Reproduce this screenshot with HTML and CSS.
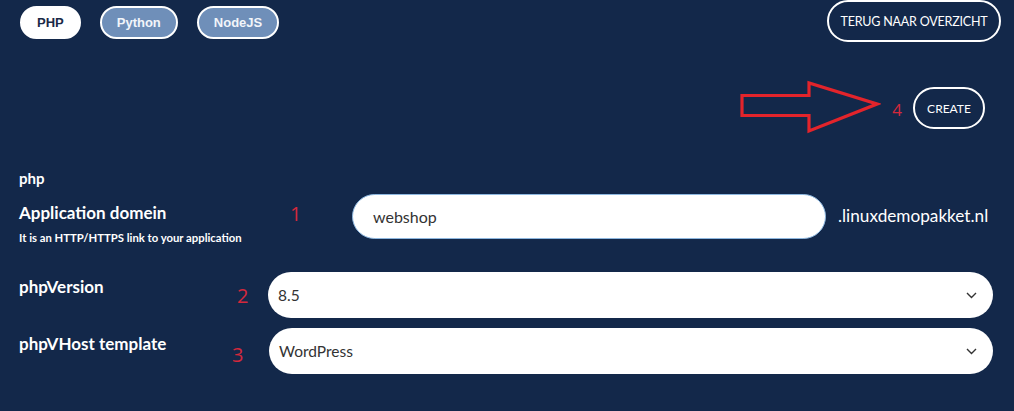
FILE: index.html
```html
<!DOCTYPE html>
<html lang="nl">
<head>
<meta charset="utf-8">
<title>Application</title>
<link rel="stylesheet" href="styles.css">
</head>
<body>
<div class="page">
  <header class="topbar">
    <nav class="tabs">
      <button class="tab tab-active">PHP</button>
      <button class="tab">Python</button>
      <button class="tab">NodeJS</button>
    </nav>
    <button class="btn-outline btn-back">TERUG NAAR OVERZICHT</button>
  </header>

  <div class="actions">
    <svg class="arrow" width="142" height="56" viewBox="0 0 142 56" aria-hidden="true">
      <path d="M3 15.5 L70 15.5 L70 3 L138 24 L70 51 L70 35.5 L3 35.5 Z" fill="none" stroke="#e3242b" stroke-width="3.2" stroke-linejoin="miter"/>
    </svg>
    <span class="mark mark-4">4</span>
    <button class="btn-outline btn-create">CREATE</button>
  </div>

  <section class="form">
    <h2 class="form-title">php</h2>

    <div class="row row-domain">
      <div class="label">
        <div class="label-title">Application domein</div>
        <div class="label-hint">It is an HTTP/HTTPS link to your application</div>
      </div>
      <span class="mark mark-1">1</span>
      <div class="field field-input">webshop</div>
      <span class="suffix">.linuxdemopakket.nl</span>
    </div>

    <div class="row row-version">
      <div class="label">
        <div class="label-title">phpVersion</div>
      </div>
      <span class="mark mark-2">2</span>
      <div class="field field-select">
        <span>8.5</span>
        <svg class="chevron" width="11" height="7" viewBox="0 0 11 7" aria-hidden="true"><path d="M1 1 L5.5 5.5 L10 1" fill="none" stroke="#333" stroke-width="1.4"/></svg>
      </div>
    </div>

    <div class="row row-template">
      <div class="label">
        <div class="label-title">phpVHost template</div>
      </div>
      <span class="mark mark-3">3</span>
      <div class="field field-select">
        <span>WordPress</span>
        <svg class="chevron" width="11" height="7" viewBox="0 0 11 7" aria-hidden="true"><path d="M1 1 L5.5 5.5 L10 1" fill="none" stroke="#333" stroke-width="1.4"/></svg>
      </div>
    </div>
  </section>
</div>
</body>
</html>
```

FILE: styles.css
```css
* { box-sizing: border-box; }

html, body {
  margin: 0;
  padding: 0;
  background: #13284a;
  height: 100%;
}

body {
  font-family: Lato, "Open Sans", sans-serif;
  color: #ffffff;
  overflow: hidden;
}

.page {
  width: 1014px;
  height: 411px;
  background: #13284a;
}

/* top bar */
.topbar {
  display: flex;
  justify-content: space-between;
  align-items: flex-start;
  padding: 0 13px 0 20px;
}

.tabs {
  display: flex;
  gap: 19px;
  margin-top: 6px;
}

.tab {
  height: 33px;
  padding: 0 15px;
  border: 2px solid #ffffff;
  border-radius: 17px;
  background: #6f8fb9;
  color: #f2f5fa;
  font-family: "Liberation Sans", Arial, sans-serif;
  font-weight: bold;
  font-size: 13px;
  line-height: 29px;
  cursor: pointer;
}

.tab-active {
  background: #ffffff;
  color: #1a2a47;
}

.btn-outline {
  background: transparent;
  border: 2px solid #ffffff;
  border-radius: 22px;
  color: #ffffff;
  font-family: Lato, "Open Sans", sans-serif;
  font-size: 12.5px;
  cursor: pointer;
}

.btn-back {
  height: 42px;
  width: 174px;
  padding: 0;
  letter-spacing: -0.2px;
}

/* actions */
.actions {
  display: flex;
  justify-content: flex-end;
  align-items: center;
  padding-right: 29px;
  margin-top: 38px;
}

.arrow {
  display: block;
  margin-right: 11px;
}

.mark {
  color: #d4283c;
  font-family: "Open Sans", Lato, sans-serif;
  font-size: 20px;
  line-height: 24px;
}

.mark-4 {
  font-size: 17px;
  margin-right: 11px;
  margin-top: 3px;
}

.btn-create {
  height: 42px;
  width: 72px;
  padding: 0;
  font-size: 12px;
}

/* form */
.form {
  padding: 0 21px 0 19px;
}

.form-title {
  margin: 32px 0 0;
  font-size: 15px;
  font-weight: bold;
  line-height: 20px;
}

.row {
  display: flex;
  align-items: flex-start;
}

.label-title {
  font-size: 17px;
  font-weight: bold;
  line-height: 20px;
}

.label-hint {
  margin-top: 8px;
  font-size: 11.3px;
  font-weight: bold;
  line-height: 14px;
}

.row-domain { margin-top: 6px; }
.row-domain .label { width: 271px; padding-top: 9px; }
.mark-1 { margin-top: 8px; width: 10px; }
.field-input {
  margin-left: 52px;
  width: 474px;
  height: 45px;
  border: 1px solid #8db7df;
  border-radius: 23px;
  background: #ffffff;
  color: #333333;
  font-size: 16px;
  line-height: 43px;
  padding-left: 20px;
}
.suffix {
  margin-left: 12px;
  margin-top: 11px;
  font-size: 17.2px;
  line-height: 22px;
}

.row-version { margin-top: 27px; }
.row-version .label { width: 218px; padding-top: 5px; }
.mark-2 { margin-top: 12px; width: 11px; }

.row-template { margin-top: 10px; }
.row-template .label { width: 213px; padding-top: 6px; }
.mark-3 { margin-top: 15px; width: 10px; }

.field-select {
  flex: 1;
  display: flex;
  align-items: center;
  justify-content: space-between;
  height: 46px;
  border-radius: 23px;
  background: #ffffff;
  color: #333333;
  font-size: 15.5px;
  padding: 0 16px 0 10px;
}

.row-version .field-select { margin-left: 20px; }
.row-template .field-select { margin-left: 27px; }

.chevron { display: block; }
```
